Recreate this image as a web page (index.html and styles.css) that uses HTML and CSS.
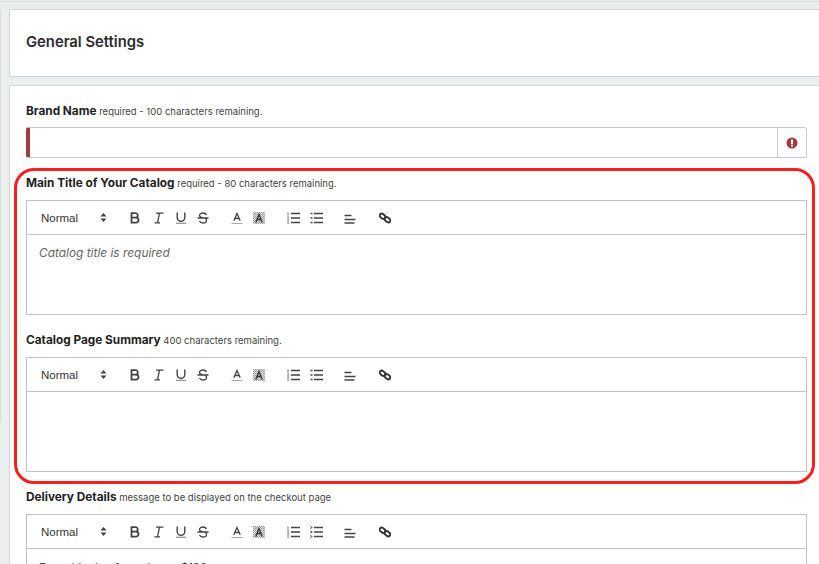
FILE: index.html
```html
<!DOCTYPE html>
<html lang="en">
<head>
<meta charset="utf-8">
<title>General Settings</title>
<link rel="stylesheet" href="styles.css">
</head>
<body>
<svg class="defs" width="0" height="0" aria-hidden="true">
  <defs>
    <pattern id="dots" width="2" height="2" patternUnits="userSpaceOnUse">
      <rect width="2" height="2" fill="#dedede"/>
      <rect width="1" height="1" fill="#999"/>
      <rect x="1" y="1" width="1" height="1" fill="#aaa"/>
    </pattern>
  </defs>
  <symbol id="i-sort" viewBox="0 0 7 9"><path d="M3.5 0 6.500 3.400H.5zM3.500 9 .5 5.600h6z" fill="#444"/></symbol>
  <symbol id="i-bold" viewBox="0 0 12 12"><path d="M2.500 1.200h4a2.200 2.200 0 0 1 0 4.500h-4zM2.500 5.700h4.500a2.500 2.500 0 0 1 0 5h-4.500z" fill="none" stroke="#444" stroke-width="1.800"/></symbol>
  <symbol id="i-italic" viewBox="0 0 12 12"><path d="M4 1.200h7.500M2.500 10.800h5.500M7.500 1.200 5.500 10.800" fill="none" stroke="#444" stroke-width="1.300"/></symbol>
  <symbol id="i-under" viewBox="0 0 12 12"><path d="M2.200.5v5a3.800 3.800 0 0 0 7.600 0v-5" fill="none" stroke="#444" stroke-width="1.400"/><path d="M1 11.300h10" stroke="#999" stroke-width="1.300"/></symbol>
  <symbol id="i-strike" viewBox="0 0 12 12"><path d="M9.500 3C9 1.800 7.500 1 6 1 4 1 2.500 2 2.500 3.500S4 5.500 6 6M2.500 9c.5 1.200 2 2 3.500 2 2 0 3.500-1 3.500-2.500 0-.8-.4-1.500-1-2M.5 6h11" fill="none" stroke="#444" stroke-width="1.300"/></symbol>
  <symbol id="i-color" viewBox="0 0 12 12"><path d="M2.800 8.800 6 1.500l3.200 7.300M4 6.500h4" fill="none" stroke="#444" stroke-width="1.300"/><path d="M.5 11.500h11" stroke="#aaa"/></symbol>
  <symbol id="i-bg" viewBox="0 0 12 12"><rect width="12" height="12" fill="url(#dots)"/><path d="M2.800 10.500 6 2.500l3.200 8M4 7.500h4" fill="none" stroke="#333" stroke-width="1.300"/></symbol>
  <symbol id="i-ol" viewBox="0 0 13 12"><path d="M4 1.500h9M4 6h9M4 10.500h9" fill="none" stroke="#444" stroke-width="1.300"/><path d="M1 .5v3M.2 5h2M.2 7h2M.2 9h2M.2 11h2" fill="none" stroke="#555" stroke-width=".9"/></symbol>
  <symbol id="i-ul" viewBox="0 0 13 12"><path d="M4 1.500h9M4 6h9M4 10.500h9M.5 1.500h2M.5 6h2M.5 10.500h2" fill="none" stroke="#444" stroke-width="1.300"/></symbol>
  <symbol id="i-check" viewBox="0 0 13 12"><path d="M4 1.500h9M4 6h9M4 10.500h9" fill="none" stroke="#444" stroke-width="1.300"/><path d="M.3.500l2 1-2 1M.3 5l2 1-2 1M.3 9.500l2 1-2 1" fill="none" stroke="#444" stroke-width=".9"/></symbol>
  <symbol id="i-align" viewBox="0 0 12 12"><path d="M.5 3.500h7M.5 7.500h11M.5 11h10" fill="none" stroke="#444" stroke-width="1.300"/></symbol>
  <symbol id="i-link" viewBox="0 0 12 12"><g fill="none" stroke="#333" stroke-width="1.900"><rect x=".5" y="2.200" width="6" height="4" rx="2" transform="rotate(38 3.500 4.200)"/><rect x="5.500" y="5.800" width="6" height="4" rx="2" transform="rotate(38 8.500 7.800)"/></g></symbol>
</svg>
<main class="page">
  <header class="card head"><h1>General Settings</h1></header>
  <section class="card form">
    <div class="field brand">
      <p class="label"><b>Brand Name</b> required - 100 characters remaining.</p>
      <div class="input">
        <span class="input-body"></span>
        <span class="addon">
          <svg width="12" height="12" viewBox="0 0 12 12"><circle cx="6" cy="6" r="5.500" fill="#a23b3b"/><rect x="5" y="2.400" width="2" height="4.600" rx=".6" fill="#fff"/><circle cx="6" cy="8.700" r="1.100" fill="#fff"/></svg>
        </span>
      </div>
    </div>
    <div class="field">
      <p class="label"><b>Main Title of Your Catalog</b> required - 80 characters remaining.</p>
      <div class="editor">
        <div class="toolbar">
          <span class="picker">Normal<svg width="7" height="9"><use href="#i-sort"/></svg></span>
          <svg class="tb g1" width="12" height="12"><use href="#i-bold"/></svg>
          <svg class="tb wide" width="12" height="12"><use href="#i-italic"/></svg>
          <svg class="tb wide" width="12" height="12"><use href="#i-under"/></svg>
          <svg class="tb" width="12" height="12"><use href="#i-strike"/></svg>
          <svg class="tb g2" width="12" height="12"><use href="#i-color"/></svg>
          <svg class="tb" width="12" height="12"><use href="#i-bg"/></svg>
          <svg class="tb g3" width="13" height="12"><use href="#i-ol"/></svg>
          <svg class="tb" width="13" height="12"><use href="#i-ul"/></svg>
          <svg class="tb g4" width="12" height="12"><use href="#i-align"/></svg>
          <svg class="tb g5" width="12" height="12"><use href="#i-link"/></svg>
        </div>
        <div class="body"><p class="ph">Catalog title is required</p></div>
      </div>
    </div>
    <div class="field second">
      <p class="label"><b>Catalog Page Summary</b> 400 characters remaining.</p>
      <div class="editor">
        <div class="toolbar">
          <span class="picker">Normal<svg width="7" height="9"><use href="#i-sort"/></svg></span>
          <svg class="tb g1" width="12" height="12"><use href="#i-bold"/></svg>
          <svg class="tb wide" width="12" height="12"><use href="#i-italic"/></svg>
          <svg class="tb wide" width="12" height="12"><use href="#i-under"/></svg>
          <svg class="tb" width="12" height="12"><use href="#i-strike"/></svg>
          <svg class="tb g2" width="12" height="12"><use href="#i-color"/></svg>
          <svg class="tb" width="12" height="12"><use href="#i-bg"/></svg>
          <svg class="tb g3" width="13" height="12"><use href="#i-ol"/></svg>
          <svg class="tb" width="13" height="12"><use href="#i-ul"/></svg>
          <svg class="tb g4" width="12" height="12"><use href="#i-align"/></svg>
          <svg class="tb g5" width="12" height="12"><use href="#i-link"/></svg>
        </div>
        <div class="body"></div>
      </div>
    </div>
    <div class="field third">
      <p class="label"><b>Delivery Details</b> message to be displayed on the checkout page</p>
      <div class="editor">
        <div class="toolbar">
          <span class="picker">Normal<svg width="7" height="9"><use href="#i-sort"/></svg></span>
          <svg class="tb g1" width="12" height="12"><use href="#i-bold"/></svg>
          <svg class="tb wide" width="12" height="12"><use href="#i-italic"/></svg>
          <svg class="tb wide" width="12" height="12"><use href="#i-under"/></svg>
          <svg class="tb" width="12" height="12"><use href="#i-strike"/></svg>
          <svg class="tb g2" width="12" height="12"><use href="#i-color"/></svg>
          <svg class="tb" width="12" height="12"><use href="#i-bg"/></svg>
          <svg class="tb g3" width="13" height="12"><use href="#i-ol"/></svg>
          <svg class="tb" width="13" height="12"><use href="#i-check"/></svg>
          <svg class="tb g4" width="12" height="12"><use href="#i-align"/></svg>
          <svg class="tb g5" width="12" height="12"><use href="#i-link"/></svg>
        </div>
        <div class="body"><p class="txt">Free shipping for orders &gt; $100</p></div>
      </div>
    </div>
    <div class="highlight"></div>
  </section>
</main>
</body>
</html>
```

FILE: styles.css
```css
* { box-sizing: border-box; }
html, body { margin: 0; height: 100%; overflow: hidden; }
body { background: #ebeeef; font-family: "Inter", "Lato", sans-serif; color: #222; }
.defs { position: absolute; }
.page { position: relative; padding: 7px 0 0 9px; border-top: 1px solid #d9dcdd; height: 563px; overflow: hidden; margin-top: 1px; }
.page::before { content: ""; position: absolute; left: 0; top: 8px; width: 1px; height: 412px; background: #d9dcdd; }
.card { background: #fff; border: 1px solid #d4d6d7; border-right: 0; }
.head { height: 68px; display: flex; align-items: center; padding: 0 0 2px 16px; }
h1 { margin: 0; font-size: 14.800px; font-weight: 600; color: #2a2c2e; }
.form { position: relative; margin-top: 8px; padding: 18px 12px 0 16px; border-bottom: 0; height: 600px; }
.field { margin: 0; }
.label { margin: 0 0 9px; height: 15px; font-size: 9.500px; line-height: 15px; color: #444; }
.label b { font-size: 11.800px; font-weight: 700; color: #1f1f1f; }
.brand .label { margin-bottom: 8px; }
.input { display: flex; height: 31px; border: 1px solid #c8cacb; border-left: 4px solid #a23b3b; border-radius: 3px; }
.input-body { flex: 1; }
.addon { width: 29px; border-left: 1px solid #c8cacb; display: flex; align-items: center; justify-content: center; }
.brand { margin-bottom: 18px; }
.editor { border: 1px solid #c4c4c4; }
.toolbar { display: flex; align-items: center; height: 34px; padding-left: 14px; border-bottom: 1px solid #c4c4c4; }
.picker { display: flex; align-items: center; justify-content: space-between; width: 66px; font-family: "Liberation Sans", sans-serif; font-size: 11.500px; color: #333; }
.tb { margin-left: 10px; flex: none; }
.tb.wide { margin-left: 11px; }
.g1 { margin-left: 22px; }
.g2 { margin-left: 22px; }
.g3 { margin-left: 22px; }
.g4 { margin-left: 21px; }
.g5 { margin-left: 23px; }
.body { height: 79px; padding: 10px 12px; }
.ph { margin: 0; font-size: 11.900px; font-style: italic; color: #666; line-height: 15px; }
.txt { margin: 2px 0 0; font-size: 11.300px; color: #444; line-height: 15px; }
.second { margin-top: 18px; }
.third { margin-top: 18px; }
.highlight { position: absolute; left: 4px; top: 82px; width: 801px; height: 316px; border: 3px solid #fb1f1b; border-radius: 20px; pointer-events: none; }
```
